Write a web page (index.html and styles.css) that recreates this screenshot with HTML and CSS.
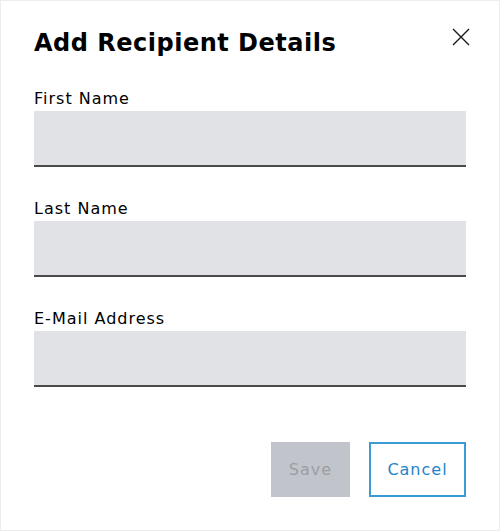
FILE: index.html
```html
<!DOCTYPE html>
<html lang="en">
<head>
    <meta charset="UTF-8">
    <title>Add Recipient Details</title>
    <link rel="stylesheet" href="styles.css">
</head>
<body>
    <div class="dialog">
        <div class="dialog-header">
            <h1>Add Recipient Details</h1>
            <button class="close" aria-label="Close">
                <svg width="18" height="18" viewBox="0 0 18 18">
                    <path d="M1 1 L17 17 M17 1 L1 17" stroke="#1a1a1a" stroke-width="1.4" fill="none"/>
                </svg>
            </button>
        </div>

        <div class="field">
            <label>First Name</label>
            <input type="text">
        </div>
        <div class="field">
            <label>Last Name</label>
            <input type="text">
        </div>
        <div class="field">
            <label>E-Mail Address</label>
            <input type="text">
        </div>

        <div class="actions">
            <button class="btn btn-save" disabled>Save</button>
            <button class="btn btn-cancel">Cancel</button>
        </div>
    </div>
</body>
</html>
```

FILE: styles.css
```css
body {
    margin: 0;
    font-family: "DejaVu Sans", sans-serif;
    color: #000;
    background: #fff;
}

.dialog {
    width: 500px;
    height: 531px;
    box-sizing: border-box;
    border: 1px solid #ededed;
    padding: 26px 33px 0 33px;
}

.dialog-header {
    display: flex;
    justify-content: space-between;
    align-items: flex-start;
    margin-bottom: 28px;
}

h1 {
    margin: 0;
    font-size: 24px;
    line-height: 32px;
    font-weight: 700;
    letter-spacing: 0.5px;
}

.close {
    border: 0;
    background: none;
    padding: 0;
    margin: 1px -4px 0 0;
    cursor: pointer;
}

.field {
    display: flex;
    flex-direction: column;
    margin-bottom: 30px;
}

.field label {
    font-size: 16px;
    line-height: 24px;
    letter-spacing: 1px;
}

.field input {
    height: 56px;
    box-sizing: border-box;
    border: 0;
    border-bottom: 2px solid #4a4a4a;
    background: #e0e2e5;
}

.actions {
    display: flex;
    justify-content: flex-end;
    gap: 19px;
    margin-top: 55px;
}

.btn {
    height: 55px;
    font-family: inherit;
    font-size: 16px;
    letter-spacing: 1px;
    padding: 0;
}

.btn-save {
    width: 79px;
    background: #c1c5cb;
    color: #9a9ea4;
    border: 0;
}

.btn-cancel {
    width: 97px;
    background: #fff;
    color: #1f84c8;
    border: 2px solid #3a9bd5;
    cursor: pointer;
}
```
